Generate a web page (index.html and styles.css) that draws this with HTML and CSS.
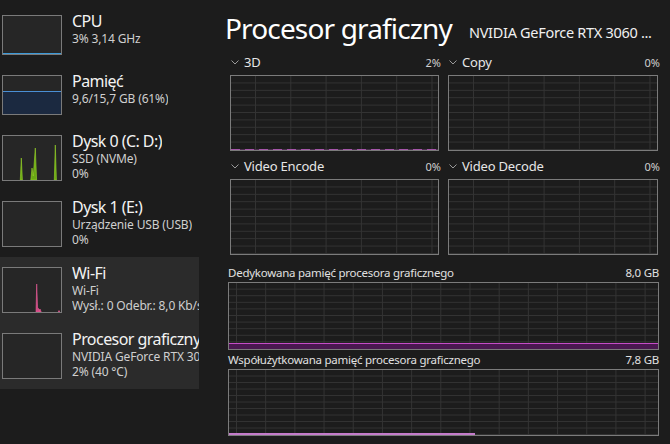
FILE: index.html
```html
<!DOCTYPE html>
<html lang="pl">
<head>
<meta charset="utf-8">
<title>Menedżer zadań — Procesor graficzny</title>
<link rel="stylesheet" href="styles.css">
</head>
<body>
<div class="app">
  <nav class="sidebar">
    <div class="item">
      <div class="thumb"><div class="cpu-line"></div></div>
      <div class="info">
        <div class="name">CPU</div>
        <div class="sub">3% 3,14 GHz</div>
      </div>
    </div>
    <div class="item">
      <div class="thumb"><div class="mem-fill"></div></div>
      <div class="info">
        <div class="name">Pamięć</div>
        <div class="sub">9,6/15,7 GB (61%)</div>
      </div>
    </div>
    <div class="item">
      <div class="thumb tall">
        <svg class="spark" viewBox="0 0 58 44" width="58" height="44">
          <polygon class="disk" points="17.3,44 18.3,22 19.4,44"/>
          <polygon class="disk" points="27.8,44 29,32 30.3,40 32.3,12 33.6,44"/>
          <polygon class="disk" points="51.3,44 52.3,9 53.4,44"/>
        </svg>
      </div>
      <div class="info">
        <div class="name">Dysk 0 (C: D:)</div>
        <div class="sub">SSD (NVMe)</div>
        <div class="sub">0%</div>
      </div>
    </div>
    <div class="item">
      <div class="thumb tall"></div>
      <div class="info">
        <div class="name">Dysk 1 (E:)</div>
        <div class="sub">Urządzenie USB (USB)</div>
        <div class="sub">0%</div>
      </div>
    </div>
    <div class="item active">
      <div class="thumb tall">
        <svg class="spark" viewBox="0 0 58 44" width="58" height="44">
          <polygon class="net" points="33,44 33.7,16 34.6,40 36,41 37,44"/>
          <polygon class="net" points="36,44 37,41 38.2,44"/>
          <polygon class="net" points="55.2,44 56,42.5 56.8,44"/>
        </svg>
      </div>
      <div class="info">
        <div class="name">Wi-Fi</div>
        <div class="sub">Wi-Fi</div>
        <div class="sub">Wysł.: 0 Odebr.: 8,0 Kb/s</div>
      </div>
    </div>
    <div class="item active">
      <div class="thumb tall"></div>
      <div class="info">
        <div class="name">Procesor graficzny 0</div>
        <div class="sub">NVIDIA GeForce RTX 3060 Laptop GPU</div>
        <div class="sub">2% (40 °C)</div>
      </div>
    </div>
  </nav>

  <main class="main">
    <header class="header">
      <h1 class="title">Procesor graficzny</h1>
      <div class="model">NVIDIA GeForce RTX 3060 ...</div>
    </header>

    <section class="engines">
      <div class="engine">
        <div class="elabel">
          <span class="ename"><svg class="chev" width="8" height="5" viewBox="0 0 8 5"><polyline points="0.5,0.5 4,4 7.5,0.5"/></svg>3D</span>
          <span class="pct">2%</span>
        </div>
        <div class="graph egrid"><div class="trace3d"></div></div>
      </div>
      <div class="engine">
        <div class="elabel">
          <span class="ename"><svg class="chev" width="8" height="5" viewBox="0 0 8 5"><polyline points="0.5,0.5 4,4 7.5,0.5"/></svg>Copy</span>
          <span class="pct">0%</span>
        </div>
        <div class="graph egrid"></div>
      </div>
      <div class="engine">
        <div class="elabel">
          <span class="ename"><svg class="chev" width="8" height="5" viewBox="0 0 8 5"><polyline points="0.5,0.5 4,4 7.5,0.5"/></svg>Video Encode</span>
          <span class="pct">0%</span>
        </div>
        <div class="graph egrid"></div>
      </div>
      <div class="engine">
        <div class="elabel">
          <span class="ename"><svg class="chev" width="8" height="5" viewBox="0 0 8 5"><polyline points="0.5,0.5 4,4 7.5,0.5"/></svg>Video Decode</span>
          <span class="pct">0%</span>
        </div>
        <div class="graph egrid"></div>
      </div>
    </section>

    <section class="memory">
      <div class="mlabel"><span>Dedykowana pamięć procesora graficznego</span><span>8,0 GB</span></div>
      <div class="graph mgrid dedicated"><div class="ded-fill"></div></div>
      <div class="mlabel second"><span>Współużytkowana pamięć procesora graficznego</span><span>7,8 GB</span></div>
      <div class="graph mgrid shared"><div class="shared-line"></div></div>
    </section>
  </main>
</div>
</body>
</html>
```
FILE: styles.css
```css
* { box-sizing: border-box; }

html, body {
  margin: 0;
  padding: 0;
  background: #1c1c1c;
}

body {
  width: 670px;
  height: 444px;
  overflow: hidden;
  font-family: "Noto Sans", "Open Sans", "DejaVu Sans", sans-serif;
  color: #f0f0f0;
}

.app {
  display: flex;
  height: 444px;
}

/* ---------- sidebar ---------- */
.sidebar {
  width: 199px;
  flex-shrink: 0;
  padding-top: 5px;
}

.item {
  display: flex;
  align-items: flex-start;
  gap: 10px;
  padding: 10px 0 10px 2px;
  white-space: nowrap;
  overflow: hidden;
}

.item.active {
  background: #2b2b2b;
}

.thumb {
  width: 60px;
  height: 40px;
  flex-shrink: 0;
  border: 1px solid #7a7a7a;
  background: #262626;
  display: flex;
  flex-direction: column;
  justify-content: flex-end;
}

.thumb.tall { height: 46px; }

.cpu-line {
  height: 1px;
  background: #3d9ad8;
}

.mem-fill {
  height: 23px;
  background: #1b2940;
  border-top: 1px solid #4a8fd6;
}

.spark { display: block; }

.disk {
  fill: #6aa814;
  stroke: #9ad62a;
  stroke-width: 0.6;
}

.net {
  fill: #d04a84;
  stroke: #ea5c98;
  stroke-width: 0.6;
}

.info {
  margin-top: -4px;
  min-width: 0;
  overflow: hidden;
}

.name {
  font-size: 16px;
  line-height: 20px;
  letter-spacing: -0.55px;
  color: #f3f3f3;
}

.sub {
  font-size: 12px;
  line-height: 15px;
  letter-spacing: -0.15px;
  color: #cfcfcf;
}

/* ---------- main ---------- */
.main {
  flex: 1;
  min-width: 0;
  padding: 0 11px 0 29px;
}

.header {
  display: flex;
  align-items: flex-start;
  gap: 17px;
  height: 44px;
  margin-top: 9px;
  white-space: nowrap;
}

.title {
  margin: 0 0 0 -3px;
  font-size: 28px;
  font-weight: 400;
  letter-spacing: -0.85px;
  color: #ffffff;
  line-height: normal;
}

.model {
  margin-top: 13px;
  font-size: 14.5px;
  letter-spacing: -0.3px;
  color: #f0f0f0;
}

.engines {
  display: grid;
  grid-template-columns: 209px 210px;
  column-gap: 9px;
  row-gap: 6px;
  margin-left: 2px;
}

.elabel {
  display: flex;
  align-items: center;
  justify-content: space-between;
  height: 18px;
  margin-bottom: 4px;
}

.ename {
  display: flex;
  align-items: center;
  gap: 5px;
  font-size: 13px;
  letter-spacing: -0.2px;
  color: #e6e6e6;
}

.chev {
  margin-left: 1px;
  fill: none;
  stroke: #9a9a9a;
  stroke-width: 1;
}

.pct {
  font-size: 11px;
  color: #d0d0d0;
  margin-right: -2px;
}

.graph {
  border: 1px solid #7b7b7b;
  background-color: #1c1c1c;
  display: flex;
  flex-direction: column;
  justify-content: flex-end;
}

.egrid {
  height: 76px;
  background-image:
    linear-gradient(to right, #333333 1px, transparent 1px),
    linear-gradient(to top, #333333 1px, transparent 1px);
  background-size: 35.3px 100%, 100% 7.4px;
  background-position: 24px 0, 0 0;
}

.trace3d {
  height: 1.5px;
  background: repeating-linear-gradient(to right, #a455a8 0 9px, #4a2e4c 9px 14px);
}

.memory {
  margin-top: 8px;
}

.mlabel {
  display: flex;
  justify-content: space-between;
  align-items: center;
  height: 18px;
  margin-bottom: 1px;
  font-size: 11.5px;
  letter-spacing: -0.25px;
  color: #e0e0e0;
}

.mgrid {
  background-image:
    linear-gradient(to right, #333333 1px, transparent 1px),
    linear-gradient(to top, #333333 1px, transparent 1px);
  background-size: 29.2px 100%, 100% 6.6px;
  background-position: 7px 0, 0 0;
}

.dedicated { height: 68px; }

.shared {
  height: 67px;
  background-size: 29.2px 100%, 100% 6.5px;
}

.ded-fill {
  height: 6px;
  background: #4a1850;
  border-top: 1px solid #c54cc8;
}

.shared-line {
  width: 246px;
  height: 2px;
  background: #c47ccb;
}
```
